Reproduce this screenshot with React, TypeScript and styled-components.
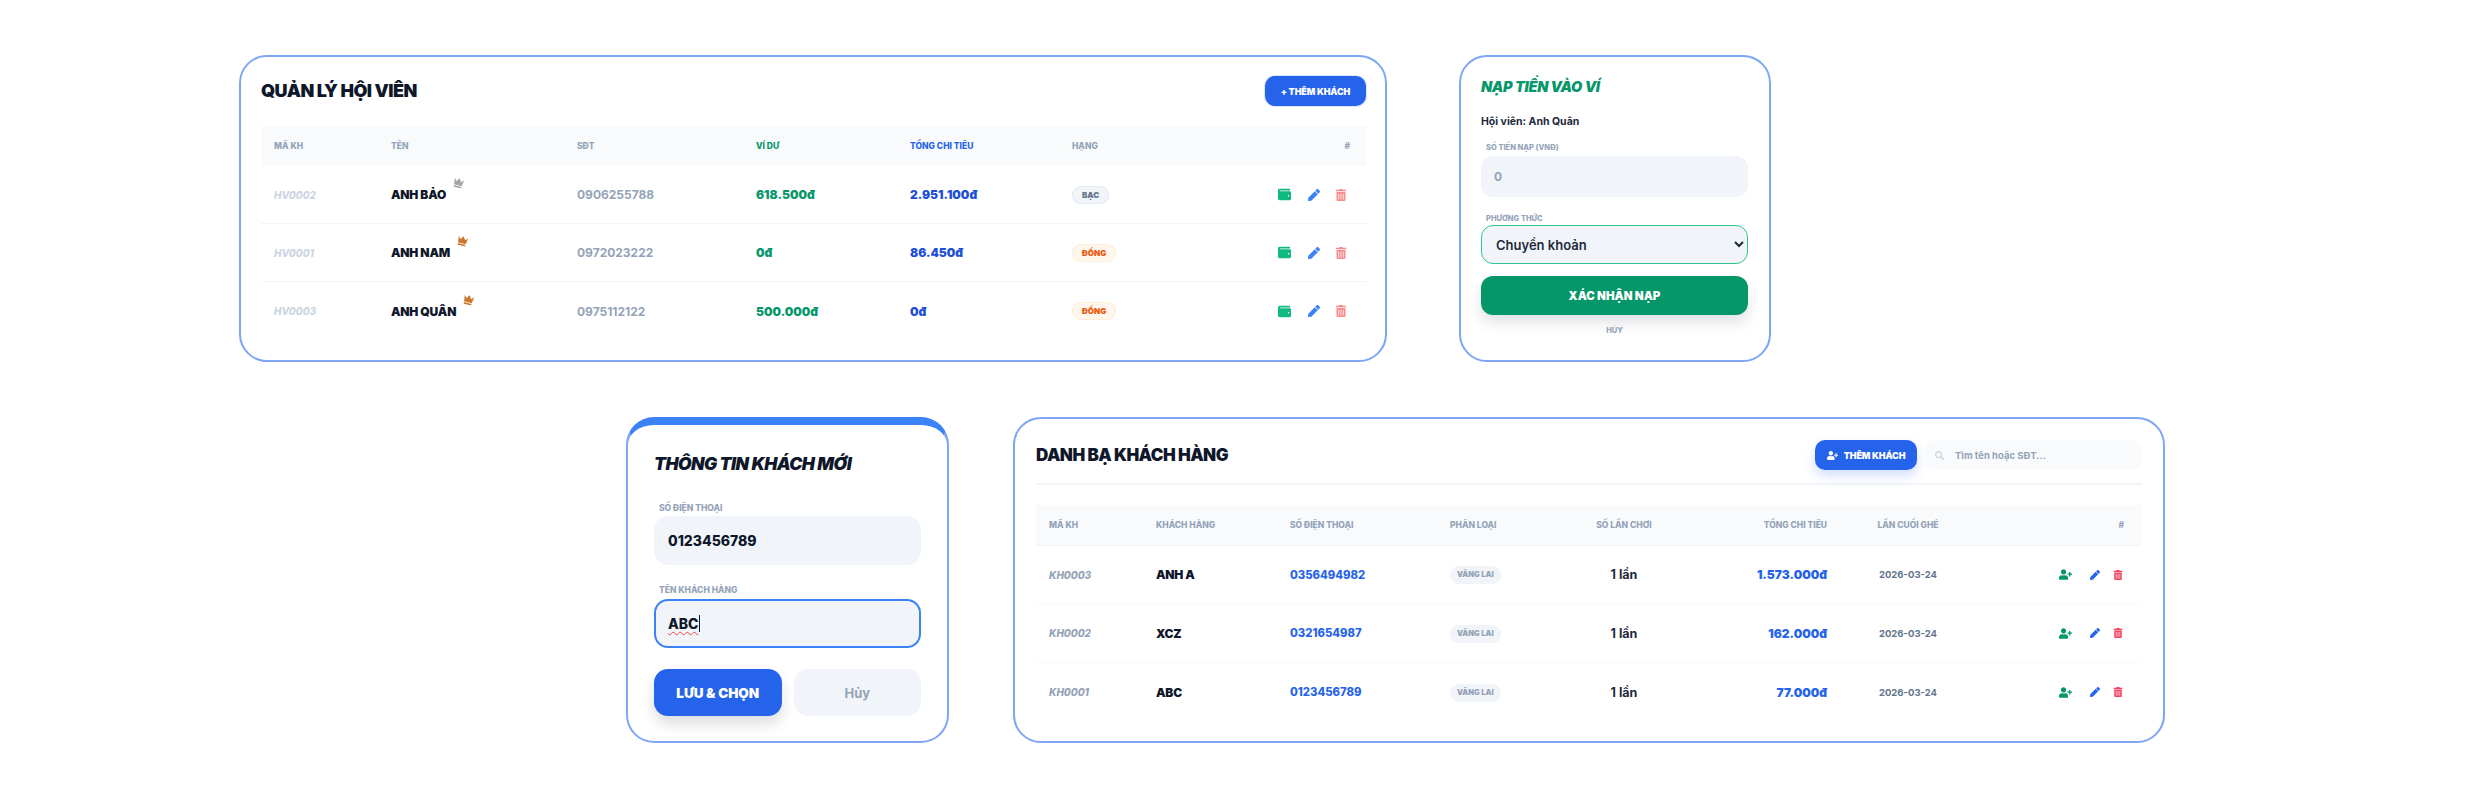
import React from "react";
import styled, { createGlobalStyle } from "styled-components";
import { FaWallet, FaPen, FaTrashAlt, FaUserPlus, FaSearch } from "react-icons/fa";

const Global = createGlobalStyle`
  html, body { margin: 0; padding: 0; background: #fff; }
  body { font-family: Inter, "Noto Sans", sans-serif; color: #0f172a; }
  * { box-sizing: border-box; }
`;

const Page = styled.div`
  width: 2476px;
  height: 794px;
  padding-top: 55px;
  display: flex;
  flex-direction: column;
  gap: 55px;
  overflow: hidden;
`;
const Row = styled.div<{ $left: number; $gap: number }>`
  display: flex;
  align-items: flex-start;
  padding-left: ${(p) => p.$left}px;
  gap: ${(p) => p.$gap}px;
`;
const Card = styled.section<{ $w: number; $h: number }>`
  width: ${(p) => p.$w}px;
  height: ${(p) => p.$h}px;
  background: #fff;
  border: 2px solid #7fa6f4;
  border-radius: 28px;
`;
const TableCard = styled(Card)<{ $pad: string }>`
  padding: ${(p) => p.$pad};
`;
const FormCard = styled(Card)`
  padding: 19px 21px 0 20px;
`;
const TopCard = styled(Card)`
  border-top: 8px solid #3b82f6;
  padding: 25px 26px 0 26px;
`;
const CardHead = styled.header<{ $rule?: boolean }>`
  display: flex;
  align-items: center;
  justify-content: space-between;
  height: 30px;
  margin-bottom: ${(p) => (p.$rule ? 13 : 20)}px;
`;
const Title = styled.h2<{ $size: number }>`
  margin: 0;
  font-size: ${(p) => p.$size}px;
  line-height: 28px;
  font-weight: 900;
  letter-spacing: -0.55px;
  color: #0f172a;
`;
const Rule = styled.hr`
  margin: 0 0 20px;
  border: 0;
  height: 2px;
  background: #f1f5f9;
`;
const HeadTools = styled.div`
  display: flex;
  align-items: center;
  gap: 8px;
`;
const AddButton = styled.button<{ $w: number; $shadow?: boolean }>`
  width: ${(p) => p.$w}px;
  height: 30px;
  border: 0;
  border-radius: 10px;
  background: #2563eb;
  color: #fff;
  font: 900 9px Inter, sans-serif;
  letter-spacing: -0.1px;
  display: flex;
  align-items: center;
  justify-content: center;
  gap: 6px;
  box-shadow: ${(p) => (p.$shadow ? "0 6px 12px rgba(37,99,235,.2)" : "0 0 0 1px #dbe7fd")};
  svg { font-size: 11px; }
`;
const Search = styled.label`
  width: 217px;
  height: 30px;
  border-radius: 10px;
  background: #f8fafc;
  display: flex;
  align-items: center;
  padding-left: 10px;
  gap: 11px;
  color: #cbd5e1;
  font-size: 9px;
`;
const SearchInput = styled.input`
  border: 0;
  background: transparent;
  outline: 0;
  font: 700 9.5px Inter, sans-serif;
  width: 170px;
  padding: 0;
  &::placeholder { color: #94a3b8; opacity: 1; }
`;

const GridRow = styled.div<{ $cols: string; $h: number; $line?: string }>`
  display: grid;
  grid-template-columns: ${(p) => p.$cols};
  align-items: center;
  height: ${(p) => p.$h}px;
  border-bottom: ${(p) => (p.$line ? `1.5px solid ${p.$line}` : "0")};
`;
const HeadRow = styled(GridRow)`
  background: #f8fafc;
`;
const Th = styled.div<{ $align?: string; $color?: string; $right?: number }>`
  padding: 0 ${(p) => p.$right ?? 13}px 0 13px;
  font-size: 8.5px;
  font-weight: 800;
  text-transform: uppercase;
  white-space: nowrap;
  text-align: ${(p) => p.$align || "left"};
  color: ${(p) => p.$color || "#94a3b8"};
`;
const Td = styled.div<{ $align?: string }>`
  padding: 0 13px;
  white-space: nowrap;
  text-align: ${(p) => p.$align || "left"};
  font-size: 12px;
`;
const Code = styled(Td)<{ $color: string }>`
  font-size: 10px;
  font-weight: 800;
  font-style: italic;
  color: ${(p) => p.$color};
`;
const Name = styled(Td)`
  font-weight: 900;
  letter-spacing: -0.2px;
  color: #0f172a;
`;
const NameText = styled.span`
  position: relative;
`;
const Crown = styled.svg<{ $color: string }>`
  position: absolute;
  left: calc(100% + 7px);
  top: -9px;
  width: 11px;
  height: 10px;
  transform: rotate(14deg);
  fill: ${(p) => p.$color};
`;
const Value = styled(Td)<{ $color: string; $weight?: number; $size?: number }>`
  font-size: ${(p) => p.$size || 12}px;
  font-weight: ${(p) => p.$weight || 900};
  color: ${(p) => p.$color};
`;
const Badge = styled.span<{ $bg: string; $line: string; $fg: string; $pad: number; $size: number }>`
  display: inline-block;
  padding: 0 ${(p) => p.$pad}px;
  line-height: 18px;
  border-radius: 10px;
  font-size: ${(p) => p.$size}px;
  font-weight: 900;
  background: ${(p) => p.$bg};
  box-shadow: inset 0 0 0 1px ${(p) => p.$line};
  color: ${(p) => p.$fg};
`;
const Actions = styled.div<{ $right: number }>`
  display: flex;
  justify-content: flex-end;
  align-items: center;
  padding-right: ${(p) => p.$right}px;
`;
const Act = styled.span<{ $color: string; $size: number; $w: number; $fade?: number }>`
  width: ${(p) => p.$w}px;
  display: flex;
  justify-content: center;
  color: ${(p) => p.$color};
  font-size: ${(p) => p.$size}px;
  opacity: ${(p) => p.$fade ?? 1};
`;

const GreenTitle = styled.h2`
  margin: 0 0 17px;
  font-size: 14.5px;
  line-height: 22px;
  font-weight: 900;
  font-style: italic;
  letter-spacing: -0.3px;
  color: #059669;
`;
const Member = styled.p`
  margin: 0 0 14px;
  font-size: 10.5px;
  line-height: 14px;
  font-weight: 700;
  color: #1e293b;
`;
const Label = styled.label<{ $size?: number; $mb: number }>`
  display: block;
  padding-left: 5px;
  margin-bottom: ${(p) => p.$mb}px;
  font-size: ${(p) => p.$size || 7.5}px;
  line-height: 10px;
  font-weight: 800;
  color: #94a3b8;
`;
const Amount = styled.input`
  display: block;
  width: 100%;
  height: 41px;
  border: 0;
  border-radius: 12px;
  background: #f1f5f9;
  padding: 0 13px;
  margin-bottom: 17px;
  font: 700 12px Inter, sans-serif;
  &::placeholder { color: #94a3b8; opacity: 1; }
`;
const Select = styled.select`
  display: block;
  width: 100%;
  height: 39px;
  border: 1.5px solid #34c48f;
  border-radius: 12px;
  background: #f1f5f9;
  padding: 0 10px;
  margin-bottom: 12px;
  outline: 0;
  color: #1e293b;
  font: 600 13px Inter, sans-serif;
`;
const Confirm = styled.button`
  display: block;
  width: 100%;
  height: 39px;
  border: 0;
  border-radius: 12px;
  background: #059669;
  color: #fff;
  font: 900 11.5px Inter, sans-serif;
  box-shadow: 0 8px 14px rgba(15,23,42,.12);
`;
const Cancel = styled.button`
  display: block;
  margin: 10px auto 0;
  border: 0;
  background: none;
  color: #94a3b8;
  font: 800 7.5px Inter, sans-serif;
`;

const ItalicTitle = styled(Title)`
  font-style: italic;
  margin-bottom: 25px;
`;
const Field = styled.div<{ $focus?: boolean }>`
  height: 49px;
  border-radius: 14px;
  background: #f1f5f9;
  border: ${(p) => (p.$focus ? "2px solid #3b82f6" : "0")};
  display: flex;
  align-items: center;
  padding: 0 ${(p) => (p.$focus ? 12 : 14)}px;
  margin-bottom: 20px;
  font-size: 14px;
  font-weight: 800;
  color: #0f172a;
`;
const Squiggle = styled.span`
  text-decoration: underline wavy #ef4444 1px;
  text-underline-offset: 2px;
  border-right: 1px solid #0f172a;
`;
const Buttons = styled.div`
  display: grid;
  grid-template-columns: 1fr 1fr;
  gap: 12px;
  margin-top: 21px;
`;
const Save = styled.button`
  height: 47px;
  border: 0;
  border-radius: 14px;
  background: #2563eb;
  color: #fff;
  font: 900 13.5px Inter, sans-serif;
  box-shadow: 0 8px 14px rgba(15,23,42,.14);
`;
const Back = styled.button`
  height: 47px;
  border: 0;
  border-radius: 14px;
  background: #f1f5f9;
  color: #94a3b8;
  font: 700 13px Inter, sans-serif;
`;
const InnerHead = styled(HeadRow)`
  border-bottom: 1px solid #f1f5f9;
`;

const memberCols = "117px 186px 179px 154px 162px 90px 1fr";
const guestCols = "107px 134px 160px 140px 94px 169px 136px 1fr";

const tiers = {
  silver: { label: "BẠC", bg: "#f1f5f9", line: "#e2e8f0", fg: "#64748b", crown: "#a6a6a6" },
  bronze: { label: "ĐỒNG", bg: "#fff7ed", line: "#ffedd5", fg: "#ea580c", crown: "#c9782c" },
};
const members = [
  { id: "HV0002", name: "ANH BẢO", phone: "0906255788", wallet: "618.500đ", total: "2.951.100đ", tier: tiers.silver },
  { id: "HV0001", name: "ANH NAM", phone: "0972023222", wallet: "0đ", total: "86.450đ", tier: tiers.bronze },
  { id: "HV0003", name: "ANH QUÂN", phone: "0975112122", wallet: "500.000đ", total: "0đ", tier: tiers.bronze },
];
const guests = [
  { id: "KH0003", name: "ANH A", phone: "0356494982", total: "1.573.000đ" },
  { id: "KH0002", name: "XCZ", phone: "0321654987", total: "162.000đ" },
  { id: "KH0001", name: "ABC", phone: "0123456789", total: "77.000đ" },
];

export default function App() {
  return (
    <Page>
      <Global />
      <Row $left={239} $gap={72}>
        <TableCard $w={1148} $h={307} $pad="19px 19px 0 20px">
          <CardHead>
            <Title $size={18}>QUẢN LÝ HỘI VIÊN</Title>
            <AddButton $w={101}>+ THÊM KHÁCH</AddButton>
          </CardHead>
          <HeadRow $cols={memberCols} $h={40}>
            <Th>Mã KH</Th>
            <Th>Tên</Th>
            <Th>SĐT</Th>
            <Th $color="#059669">Ví dư</Th>
            <Th $color="#2563eb">Tổng chi tiêu</Th>
            <Th>Hạng</Th>
            <Th $align="right" $right={16}>#</Th>
          </HeadRow>
          {members.map((m, i) => (
            <GridRow key={m.id} $cols={memberCols} $h={58} $line={i < 2 ? "#f1f5f9" : undefined}>
              <Code $color="#cbd5e1">{m.id}</Code>
              <Name>
                <NameText>
                  {m.name}
                  <Crown $color={m.tier.crown} viewBox="0 0 16 14">
                    <path d="M1 1l3.5 4L8 0l3.5 5L15 1l-1.2 9.5H2.2zM2.4 11.5h11.2V14H2.4z" />
                  </Crown>
                </NameText>
              </Name>
              <Value $color="#94a3b8" $weight={700}>{m.phone}</Value>
              <Value $color="#059669">{m.wallet}</Value>
              <Value $color="#1d4ed8">{m.total}</Value>
              <Td>
                <Badge $pad={10} $size={8} $bg={m.tier.bg} $line={m.tier.line} $fg={m.tier.fg}>{m.tier.label}</Badge>
              </Td>
              <Actions $right={13}>
                <Act $color="#10b981" $size={13} $w={30}><FaWallet /></Act>
                <Act $color="#3b82f6" $size={12} $w={30}><FaPen /></Act>
                <Act $color="#f87171" $size={12} $w={24} $fade={0.8}><FaTrashAlt /></Act>
              </Actions>
            </GridRow>
          ))}
        </TableCard>
        <FormCard $w={312} $h={307}>
          <GreenTitle>NẠP TIỀN VÀO VÍ</GreenTitle>
          <Member>Hội viên: Anh Quân</Member>
          <Label $mb={3}>SỐ TIỀN NẠP (VNĐ)</Label>
          <Amount placeholder="0" readOnly />
          <Label $mb={1}>PHƯƠNG THỨC</Label>
          <Select defaultValue="ck">
            <option value="ck">Chuyển khoản</option>
          </Select>
          <Confirm>XÁC NHẬN NẠP</Confirm>
          <Cancel>HỦY</Cancel>
        </FormCard>
      </Row>
      <Row $left={626} $gap={64}>
        <TopCard $w={323} $h={326}>
          <ItalicTitle $size={17.5}>THÔNG TIN KHÁCH MỚI</ItalicTitle>
          <Label $size={8.5} $mb={3}>SỐ ĐIỆN THOẠI</Label>
          <Field>0123456789</Field>
          <Label $size={8.5} $mb={4}>TÊN KHÁCH HÀNG</Label>
          <Field $focus><Squiggle>ABC</Squiggle></Field>
          <Buttons>
            <Save>LƯU &amp; CHỌN</Save>
            <Back>Hủy</Back>
          </Buttons>
        </TopCard>
        <TableCard $w={1152} $h={326} $pad="21px 21px 0 21px">
          <CardHead $rule>
            <Title $size={17}>DANH BẠ KHÁCH HÀNG</Title>
            <HeadTools>
              <AddButton $w={102} $shadow><FaUserPlus /> THÊM KHÁCH</AddButton>
              <Search>
                <FaSearch />
                <SearchInput placeholder="Tìm tên hoặc SĐT..." readOnly />
              </Search>
            </HeadTools>
          </CardHead>
          <Rule />
          <InnerHead $cols={guestCols} $h={41}>
            <Th>Mã KH</Th>
            <Th>Khách hàng</Th>
            <Th>Số điện thoại</Th>
            <Th>Phân loại</Th>
            <Th $align="center">Số lần chơi</Th>
            <Th $align="right">Tổng chi tiêu</Th>
            <Th $align="center">Lần cuối ghé</Th>
            <Th $align="right" $right={18}>#</Th>
          </InnerHead>
          {guests.map((g, i) => (
            <GridRow key={g.id} $cols={guestCols} $h={58.5} $line={i < 2 ? "#f8fafc" : undefined}>
              <Code $color="#94a3b8">{g.id}</Code>
              <Name>{g.name}</Name>
              <Value $color="#2563eb" $weight={800} $size={11.3}>{g.phone}</Value>
              <Td>
                <Badge $pad={7} $size={7.5} $bg="#f1f5f9" $line="#f1f5f9" $fg="#94a3b8">VÃNG LAI</Badge>
              </Td>
              <Value $color="#1e293b" $weight={700} $size={12.5} $align="center">1 lần</Value>
              <Value $color="#2563eb" $align="right">{g.total}</Value>
              <Value $color="#64748b" $weight={700} $size={9.5} $align="center">2026-03-24</Value>
              <Actions $right={13}>
                <Act $color="#059669" $size={13} $w={34}><FaUserPlus /></Act>
                <Act $color="#2563eb" $size={10} $w={25}><FaPen /></Act>
                <Act $color="#f43f5e" $size={10} $w={22}><FaTrashAlt /></Act>
              </Actions>
            </GridRow>
          ))}
        </TableCard>
      </Row>
    </Page>
  );
}
